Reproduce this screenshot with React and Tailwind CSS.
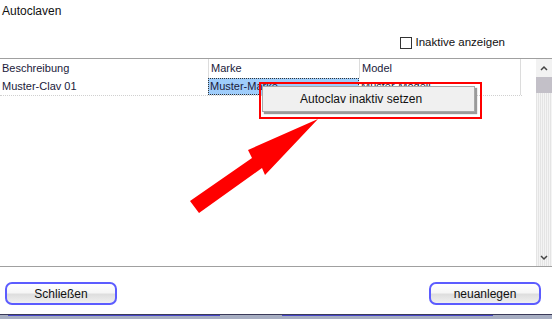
import React from 'react';

const App = () => {
  return (
    <div className="relative w-[552px] h-[319px] bg-white overflow-hidden flex flex-col text-[11px] text-[#1a1a3a] font-['Liberation_Sans',sans-serif]">
      {/* Title */}
      <div className="h-[34px] pl-[2px] pt-[4px] text-[12px] leading-[14px] text-[#111]">Autoclaven</div>

      {/* Checkbox */}
      <div className="h-[18px] flex items-center justify-end pr-[47px]">
        <div className="w-[12px] h-[12px] border border-[#333] bg-white mr-[3px]"></div>
        <span className="text-[11.5px] text-[#111]">Inaktive anzeigen</span>
      </div>
      <div className="h-[6px]"></div>

      {/* Table + scrollbar */}
      <div className="h-[209px] border-t border-b border-[#a0a0a0] flex">
        <div className="flex-1 flex flex-col">
          <div className="h-[19px] flex items-center">
            <div className="w-[208px] pl-[2px]">Beschreibung</div>
            <div className="w-[151px] h-full flex items-center pl-[2px] border-l border-[#dcdcdc]">Marke</div>
            <div className="w-[162px] h-full flex items-center pl-[2px] border-l border-r border-[#dcdcdc]">Model</div>
          </div>
          <div className="h-[18px] flex border-b border-dotted border-[#d0d0d0] w-[522px]">
            <div className="w-[208px] pl-[2px] flex items-center">Muster-Clav 01</div>
            <div className="w-[151px] h-[17px] flex items-center pl-[1px] bg-[#9fcdfb] border border-dotted border-[#333]">Muster-Marke</div>
            <div className="w-[162px] flex items-center pl-[2px] border-r border-[#dcdcdc]">Muster-Modell</div>
          </div>
        </div>
        <div className="w-[16px] flex flex-col bg-[repeating-linear-gradient(90deg,#e4e4e4_0px,#e4e4e4_1px,#f4f4f4_1px,#f4f4f4_2px)]">
          <div className="h-[18px] flex items-center justify-center bg-[#f2f2f2]">
            <svg width="8" height="6" viewBox="0 0 8 6"><path d="M1 5 L4 2 L7 5" fill="none" stroke="#444" strokeWidth="1.5" /></svg>
          </div>
          <div className="h-[16px] bg-[#c3c0c8]"></div>
          <div className="flex-1"></div>
          <div className="h-[16px] flex items-center justify-center">
            <svg width="8" height="6" viewBox="0 0 8 6"><path d="M1 1 L4 4 L7 1" fill="none" stroke="#444" strokeWidth="1.5" /></svg>
          </div>
        </div>
      </div>

      {/* Buttons */}
      <div className="h-[47px] flex justify-between pt-[15px] pl-[5px] pr-[11px]">
        <button className="w-[112px] h-[23px] rounded-[7px] border-2 border-[#5c5cff] bg-[linear-gradient(#ffffff,#f6f6f6_45%,#dedede_55%,#f0f0f0)] text-[12px] text-[#111]">Schließen</button>
        <button className="w-[112px] h-[23px] rounded-[7px] border-2 border-[#5c5cff] bg-[linear-gradient(#ffffff,#f6f6f6_45%,#dedede_55%,#f0f0f0)] text-[12px] text-[#111]">neuanlegen</button>
      </div>

      {/* Bottom strip */}
      <div className="flex-1 border-t border-[#3a3a58] bg-[#a7aec2] flex">
        <div className="ml-[8px] w-[212px] h-[1px] bg-[#4848c8]"></div>
        <div className="ml-[62px] w-[211px] h-[1px] bg-[#4848c8]"></div>
      </div>

      {/* Context menu */}
      <div className="absolute left-[262px] top-[86px] w-[213px] h-[26px] bg-[#f0f0f0] border border-[#a8a8a8] shadow-[2px_2px_1px_#9a9a9a] flex items-center pl-[37px] text-[12px] text-[#111]">
        Autoclav inaktiv setzen
      </div>

      {/* Highlight box */}
      <div className="absolute left-[259px] top-[82px] w-[223px] h-[37px] border-2 border-[#ff0000]"></div>

      {/* Arrow */}
      <svg className="absolute left-0 top-0" width="552" height="319" viewBox="0 0 552 319">
        <polygon points="318,119 248,150 252,158 190,201 199,213 262,168 265,175" fill="#ff0000" />
      </svg>
    </div>
  );
};

export default App;
